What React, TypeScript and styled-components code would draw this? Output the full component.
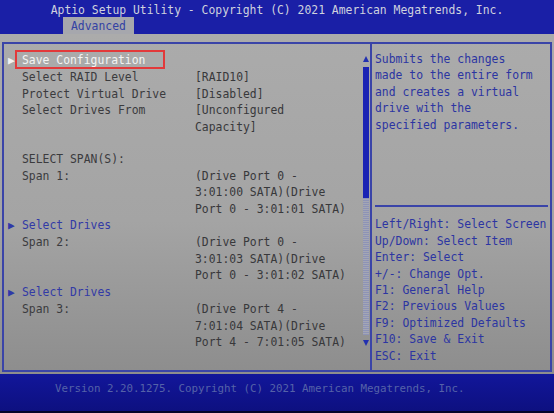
import styled, { createGlobalStyle } from "styled-components";

const GlobalStyle = createGlobalStyle`
  html, body {
    margin: 0;
    padding: 0;
    background: #000;
  }
`;

const MONO = `"DejaVu Sans Mono", "Liberation Mono", monospace`;
const LINE = "16.4px";

const Screen = styled.div`
  width: 554px;
  height: 413px;
  display: flex;
  flex-direction: column;
  overflow: hidden;
  font: 11.4px ${MONO};
  line-height: ${LINE};
`;

const TopBar = styled.div`
  height: 34px;
  background: #1a1fa6;
  display: flex;
  flex-direction: column;
`;

const Title = styled.div`
  padding-top: 2px;
  height: 15px;
  line-height: 16px;
  text-align: center;
  color: #cfd2de;
  white-space: pre;
`;

const TabRow = styled.div`
  display: flex;
  padding-left: 63px;
  flex: 1;
  align-items: flex-end;
`;

const Tab = styled.div`
  height: 17px;
  line-height: 18px;
  padding: 0 8px;
  background: #a6a7ad;
  color: #3442a4;
`;

const Main = styled.div`
  flex: 1;
  display: flex;
  padding: 8px 2px 2px 2px;
  background: linear-gradient(180deg, #ababab 0%, #a4a4a4 55%, #8d8d8d 100%);
`;

const Frame = styled.div`
  flex: 1;
  display: flex;
  border: 2px solid #3a44a8;
`;

const LeftPane = styled.div`
  width: 357px;
  padding: 8px 0 0 4px;
  box-sizing: border-box;
`;

const Row = styled.div`
  display: grid;
  grid-template-columns: 14px 173px 1fr;
  white-space: pre;
  color: #3b3b3e;
`;

const Pointer = styled.span<{ $tone: "light" | "blue" }>`
  font-size: 11px;
  color: ${({ $tone }) => ($tone === "light" ? "#f2f2f2" : "#2f38a8")};
`;

const Label = styled.span<{ $tone?: "light" | "blue" }>`
  position: relative;
  color: ${({ $tone }) =>
    $tone === "light" ? "#f4f4f4" : $tone === "blue" ? "#323aa6" : "inherit"};
`;

// red marker drawn over the active item
const Marker = styled.span`
  position: absolute;
  inset: -3px -20px -2px -7px;
  border: 2px solid #e2393a;
  pointer-events: none;
`;

const Value = styled.span`
  color: #38383b;
`;

const Scrollbar = styled.div`
  width: 9px;
  display: flex;
  flex-direction: column;
  align-items: center;
  padding: 10px 0 22px;
  box-sizing: border-box;
`;

const Arrow = styled.div<{ $down?: boolean }>`
  width: 0;
  height: 0;
  margin: 2px 0;
  border-left: 3.5px solid transparent;
  border-right: 3.5px solid transparent;
  ${({ $down }) =>
    $down
      ? "border-top: 6px solid #2230b0;"
      : "border-bottom: 6px solid #2230b0;"}
`;

const Track = styled.div`
  flex: 1;
  width: 6px;
  margin: 3px 0;
  background: repeating-linear-gradient(
    0deg,
    #8d93b6 0 1px,
    #a4a6b4 1px 2px
  );
`;

const Thumb = styled.div`
  height: 131px;
  background: #1a23b4;
`;

const RightPane = styled.div`
  flex: 1;
  display: flex;
  flex-direction: column;
  border-left: 2px solid #3a44a8;
  color: #2c35a2;
  white-space: pre;
`;

const HelpText = styled.div`
  flex: 1;
  padding: 7px 0 0 3px;
`;

const KeyHelp = styled.div`
  margin: 0 2px 0 3px;
  padding: 9px 0 6px;
  border-top: 2px solid #3a44a8;
`;

const Footer = styled.div`
  height: 39px;
  padding-top: 7px;
  box-sizing: border-box;
  background: linear-gradient(180deg, #12169a 0%, #0d1080 100%);
  border-bottom: 2px solid #05052a;
  color: #5562a8;
  font-size: 10.8px;
  padding-left: 55px;
  white-space: pre;
`;

type Item = {
  label?: string;
  value?: string;
  kind?: "selected" | "link";
};

const items: Item[] = [
  { label: "Save Configuration", kind: "selected" },
  { label: "Select RAID Level", value: "[RAID10]" },
  { label: "Protect Virtual Drive", value: "[Disabled]" },
  { label: "Select Drives From", value: "[Unconfigured" },
  { value: "Capacity]" },
  {},
  { label: "SELECT SPAN(S):" },
  { label: "Span 1:", value: "(Drive Port 0 -" },
  { value: "3:01:00 SATA)(Drive" },
  { value: "Port 0 - 3:01:01 SATA)" },
  { label: "Select Drives", kind: "link" },
  { label: "Span 2:", value: "(Drive Port 0 -" },
  { value: "3:01:03 SATA)(Drive" },
  { value: "Port 0 - 3:01:02 SATA)" },
  { label: "Select Drives", kind: "link" },
  { label: "Span 3:", value: "(Drive Port 4 -" },
  { value: "7:01:04 SATA)(Drive" },
  { value: "Port 4 - 7:01:05 SATA)" },
];

const help = [
  "Submits the changes",
  "made to the entire form",
  "and creates a virtual",
  "drive with the",
  "specified parameters.",
];

const keys = [
  "Left/Right: Select Screen",
  "Up/Down: Select Item",
  "Enter: Select",
  "+/-: Change Opt.",
  "F1: General Help",
  "F2: Previous Values",
  "F9: Optimized Defaults",
  "F10: Save & Exit",
  "ESC: Exit",
];

const App = () => {
  return (
    <Screen>
      <GlobalStyle />
      <TopBar>
        <Title>Aptio Setup Utility - Copyright (C) 2021 American Megatrends, Inc.</Title>
        <TabRow>
          <Tab>Advanced</Tab>
        </TabRow>
      </TopBar>
      <Main>
        <Frame>
          <LeftPane>
            {items.map((item, i) => {
              const tone =
                item.kind === "selected"
                  ? "light"
                  : item.kind === "link"
                  ? "blue"
                  : undefined;
              return (
                <Row key={i}>
                  <span>{tone && <Pointer $tone={tone}>▶</Pointer>}</span>
                  <span>
                    <Label $tone={tone}>
                      {item.label ?? " "}
                      {item.kind === "selected" && <Marker />}
                    </Label>
                  </span>
                  <Value>{item.value ?? ""}</Value>
                </Row>
              );
            })}
          </LeftPane>
          <Scrollbar>
            <Arrow />
            <Track>
              <Thumb />
            </Track>
            <Arrow $down />
          </Scrollbar>
          <RightPane>
            <HelpText>
              {help.map((line) => (
                <div key={line}>{line}</div>
              ))}
            </HelpText>
            <KeyHelp>
              {keys.map((line) => (
                <div key={line}>{line}</div>
              ))}
            </KeyHelp>
          </RightPane>
        </Frame>
      </Main>
      <Footer>Version 2.20.1275. Copyright (C) 2021 American Megatrends, Inc.</Footer>
    </Screen>
  );
};

export default App;
